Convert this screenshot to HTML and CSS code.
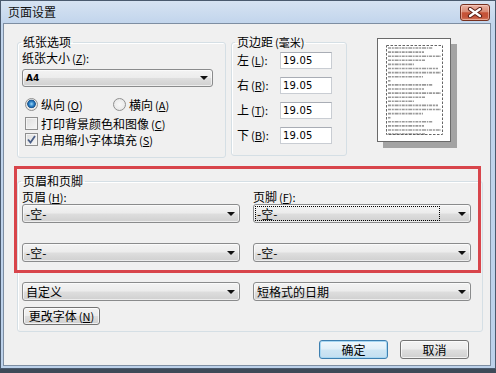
FILE: index.html
```html
<!DOCTYPE html>
<html lang="zh-CN">
<head>
<meta charset="utf-8">
<title>页面设置</title>
<link rel="stylesheet" href="styles.css">
</head>
<body>
<div class="window">
  <div class="titlebar">
    <span class="title">页面设置</span>
    <button class="close" aria-label="关闭">
      <svg width="16" height="11" viewBox="0 0 16 11">
        <path d="M3 2 L13 9 M13 2 L3 9" stroke="#5a1d14" stroke-width="4.2" stroke-linecap="round" fill="none"/>
        <path d="M3 2 L13 9 M13 2 L3 9" stroke="#ffffff" stroke-width="2.2" stroke-linecap="round" fill="none"/>
      </svg>
    </button>
  </div>
  <div class="content">
    <div class="top-row">
      <fieldset class="group paper">
        <legend>纸张选项</legend>
        <div class="paper-body">
          <div class="label">纸张大小<span class="acc">(<u>Z</u>):</span></div>
          <div class="combo paper-size"><span class="val latin">A4</span><span class="arrow"></span></div>
          <div class="radio-row">
            <span class="opt first"><span class="radio on"></span>纵向<span class="acc">(<u>O</u>)</span></span>
            <span class="opt"><span class="radio"></span>横向<span class="acc">(<u>A</u>)</span></span>
          </div>
          <div class="opt check-row gap"><span class="check"></span>打印背景颜色和图像<span class="acc">(<u>C</u>)</span></div>
          <div class="opt check-row next"><span class="check"><svg width="11" height="11" viewBox="0 0 11 11"><path d="M2 5.5 L4.5 8.5 L9 2" stroke="#4a5e86" stroke-width="1.8" fill="none"/></svg></span>启用缩小字体填充<span class="acc">(<u>S</u>)</span></div>
        </div>
      </fieldset>
      <fieldset class="group margins">
        <legend>页边距<span class="acc">(毫米)</span></legend>
        <div class="margin-grid">
          <span class="mlabel">左<span class="acc">(<u>L</u>):</span></span><span class="input">19.05</span>
          <span class="mlabel">右<span class="acc">(<u>R</u>):</span></span><span class="input">19.05</span>
          <span class="mlabel">上<span class="acc">(<u>T</u>):</span></span><span class="input">19.05</span>
          <span class="mlabel">下<span class="acc">(<u>B</u>):</span></span><span class="input">19.05</span>
        </div>
      </fieldset>
      <div class="preview">
        <div class="page">
          <svg width="72" height="102" viewBox="0 0 72 102">
            <rect x="8.5" y="6.5" width="56" height="89" fill="none" stroke="#666" stroke-width="1" stroke-dasharray="2.5 1.5"/>
            <g stroke="#555" stroke-width="1.6" stroke-dasharray="3 0.8 2 0.8 4 0.8 1.5 0.8" opacity="0.6">
              <line x1="10" y1="9" x2="55" y2="9"/>
              <line x1="10" y1="13.1" x2="46" y2="13.1"/>
              <line x1="10" y1="17.2" x2="63" y2="17.2"/>
              <line x1="10" y1="21.3" x2="47" y2="21.3"/>
              <line x1="10" y1="25.4" x2="36" y2="25.4"/>
              <line x1="10" y1="29.5" x2="60" y2="29.5"/>
              <line x1="10" y1="33.6" x2="63" y2="33.6"/>
              <line x1="10" y1="37.7" x2="45" y2="37.7"/>
              <line x1="10" y1="41.8" x2="12.5" y2="41.8"/>
              <line x1="10" y1="45.9" x2="55" y2="45.9"/>
              <line x1="10" y1="50" x2="46" y2="50"/>
              <line x1="10" y1="54.1" x2="63" y2="54.1"/>
              <line x1="10" y1="58.2" x2="47" y2="58.2"/>
              <line x1="10" y1="62.3" x2="36" y2="62.3"/>
              <line x1="10" y1="66.4" x2="60" y2="66.4"/>
              <line x1="10" y1="70.5" x2="63" y2="70.5"/>
              <line x1="10" y1="74.6" x2="45" y2="74.6"/>
              <line x1="10" y1="78.7" x2="12.5" y2="78.7"/>
              <line x1="10" y1="82.8" x2="55" y2="82.8"/>
              <line x1="10" y1="86.9" x2="46" y2="86.9"/>
              <line x1="10" y1="91" x2="63" y2="91"/>
              <line x1="10" y1="95" x2="47" y2="95"/>
            </g>
          </svg>
        </div>
      </div>
    </div>

    <fieldset class="group hf">
      <legend>页眉和页脚</legend>
      <div class="hf-grid">
        <div class="col">
          <div class="label hf-label">页眉<span class="acc">(<u>H</u>):</span></div>
          <div class="combo first-combo"><span class="val">-空-</span><span class="arrow"></span></div>
          <div class="combo next-combo"><span class="val">-空-</span><span class="arrow"></span></div>
          <div class="combo next-combo"><span class="val">自定义</span><span class="arrow"></span></div>
          <button class="btn font-btn">更改字体<span class="acc">(<u>N</u>)</span></button>
        </div>
        <div class="col">
          <div class="label hf-label">页脚<span class="acc">(<u>F</u>):</span></div>
          <div class="combo first-combo focused"><span class="focus-rect"><span class="val">-空-</span></span><span class="arrow"></span></div>
          <div class="combo next-combo"><span class="val">-空-</span><span class="arrow"></span></div>
          <div class="combo next-combo"><span class="val">短格式的日期</span><span class="arrow"></span></div>
        </div>
      </div>
    </fieldset>

    <div class="actions">
      <button class="btn action default">确定</button>
      <button class="btn action">取消</button>
    </div>

    <div class="annot"></div>
  </div>
</div>
</body>
</html>
```

FILE: styles.css
```css
* { box-sizing: border-box; }

html, body { margin: 0; padding: 0; }

body {
  width: 496px;
  height: 373px;
  overflow: hidden;
  background: #3e4a58;
  font-family: "Noto Sans CJK SC", "Liberation Sans", sans-serif;
  font-size: 12px;
  line-height: 14px;
  color: #000;
}

.window {
  width: 496px;
  height: 369px;
  border: 1px solid #4a5a6e;
  padding: 0 4px 2px 2px;
  background: linear-gradient(#d6e3f2 0, #c2d5ec 22px, #bcd1ea 100%);
  display: flex;
  flex-direction: column;
}

.titlebar {
  height: 22px;
  flex: none;
  display: flex;
  align-items: center;
  padding-left: 5px;
}

.title { font-size: 12px; color: #111; }

.close {
  margin-left: auto;
  margin-right: 1px;
  width: 30px;
  height: 17px;
  padding: 0;
  border: 1px solid #76301f;
  border-radius: 3px;
  background: linear-gradient(#eab3a4 0, #d98a74 45%, #c65236 52%, #c5553b 80%, #d47a5d 100%);
  box-shadow: inset 0 0 0 1px rgba(255, 220, 210, 0.5);
  display: flex;
  align-items: center;
  justify-content: center;
}

.content {
  flex: 1;
  position: relative;
  background: #f0f0f0;
  border: 1px solid #7e8ea2;
  padding: 11px 20px 0 13px;
}

.acc { font-size: 11px; margin-left: 2px; }
.acc u { text-decoration-thickness: 1px; text-underline-offset: 1px; }

/* group boxes */
.group {
  margin: 0;
  padding: 0;
  border: 1px solid #d5dfe5;
  border-radius: 3px;
  box-shadow: inset 1px 1px 0 #fff;
  min-width: 0;
}

.group legend {
  margin-left: 3px;
  padding: 0 2px;
  line-height: 14px;
  font-size: 12px;
}

.top-row {
  display: flex;
  align-items: flex-start;
}

.paper { width: 209px; height: 123px; }

.paper-body { padding: 2px 0 0 4px; }

.label { height: 14px; white-space: nowrap; }

.combo {
  display: flex;
  align-items: center;
  height: 19px;
  border: 1px solid #8a8b8c;
  border-radius: 3px;
  background: linear-gradient(#f3f3f3 0, #ececec 48%, #dedede 52%, #d0d0d0 100%);
  box-shadow: inset 0 0 0 1px rgba(255, 255, 255, 0.6);
  padding-left: 3px;
  white-space: nowrap;
}

.combo .val { line-height: 14px; }

.combo .val.latin {
  font-family: "DejaVu Sans", sans-serif;
  font-size: 9px;
  font-weight: bold;
}

.arrow {
  margin-left: auto;
  margin-right: 4px;
  width: 0;
  height: 0;
  border-left: 4px solid transparent;
  border-right: 4px solid transparent;
  border-top: 4px solid #111;
}

.paper-size { width: 191px; height: 18px; margin-top: 4px; }

.opt {
  display: flex;
  align-items: center;
  height: 15px;
  white-space: nowrap;
}

.radio-row {
  display: flex;
  align-items: center;
  height: 15px;
  margin-top: 10px;
}

.radio-row .first { width: 88px; }

.radio {
  width: 13px;
  height: 13px;
  margin: 0 3px 0 3px;
  border: 1px solid #8f8f8f;
  border-radius: 50%;
  background: radial-gradient(circle at 50% 50%, #f8f8f8 0, #e3e3e3 100%);
  flex: none;
}

.radio.on {
  background:
    radial-gradient(circle at 50% 45%, #9fd6f7 0, #3b8fd0 2px, #175ea3 3.5px, #2c5f8e 4px, rgba(255,255,255,0) 4.6px),
    radial-gradient(circle, #f8f8f8 0, #dcdcdc 100%);
}

.check-row.gap { margin-top: 4px; }
.check-row.next { margin-top: 1px; }

.check {
  width: 13px;
  height: 13px;
  margin: 0 3px 0 3px;
  border: 1px solid #8f8f8f;
  background: linear-gradient(135deg, #dedede 0, #f6f6f6 100%);
  box-shadow: inset 0 0 0 1px #f4f4f4;
  flex: none;
  display: flex;
  align-items: center;
  justify-content: center;
}

/* margins group */
.margins { width: 116px; height: 121px; margin-left: 5px; }

.margin-grid {
  display: grid;
  grid-template-columns: 43px 52px;
  row-gap: 7px;
  align-items: center;
  padding: 2px 0 0 5px;
}

.mlabel { white-space: nowrap; line-height: 17px; }

.input {
  height: 17px;
  background: #fff;
  border: 1px solid #c9cdd3;
  border-top-color: #a9adb5;
  font-family: "DejaVu Sans", sans-serif;
  font-size: 10px;
  line-height: 15px;
  padding-left: 2px;
  letter-spacing: 0.2px;
}

/* preview */
.preview { margin: 3px 0 0 30px; }

.page {
  width: 74px;
  height: 104px;
  background: #fff;
  border: 1px solid #6a6a6a;
  box-shadow: 6px 6px 0 #a3a3a3;
}

.page svg { display: block; }

/* header/footer group */
.hf { width: 466px; height: 158px; margin-top: 16px; }

.hf-grid {
  display: grid;
  grid-template-columns: 218px 218px;
  column-gap: 13px;
  padding-left: 4px;
}

.hf-label { margin-top: 2px; }

.first-combo { margin-top: 0; }
.next-combo { margin-top: 20px; }

.focused { padding-left: 1px; }

.focus-rect {
  flex: 1;
  align-self: stretch;
  margin: 1px 18px 1px 0;
  border: 1px dotted #000;
  display: flex;
  align-items: center;
  padding-left: 1px;
}

.btn {
  font-family: "Noto Sans CJK SC", "Liberation Sans", sans-serif;
  font-size: 12px;
  line-height: 14px;
  color: #000;
  border: 1px solid #737373;
  border-radius: 3px;
  background: linear-gradient(#f3f3f3 0, #ececec 48%, #dedede 52%, #d0d0d0 100%);
  box-shadow: inset 0 0 0 1px rgba(255, 255, 255, 0.7);
  padding: 0;
  white-space: nowrap;
}

.font-btn {
  width: 77px;
  height: 18px;
  margin: 6px 0 0 1px;
}

.actions {
  display: flex;
  justify-content: flex-end;
  gap: 12px;
  margin-top: 8px;
  padding-right: 1px;
}

.action { width: 69px; height: 19px; }

.btn.default {
  border-color: #3d7fb0;
  background: linear-gradient(#eef7fd 0, #e0eff8 48%, #cfe6f4 52%, #c3def0 100%);
  box-shadow: inset 0 0 0 1px #a8d7f2;
}

/* annotation rectangle over the header/footer area */
.annot {
  position: absolute;
  left: 10px;
  top: 142px;
  width: 467px;
  height: 107px;
  border: 3px solid #d8454b;
  pointer-events: none;
}
```
